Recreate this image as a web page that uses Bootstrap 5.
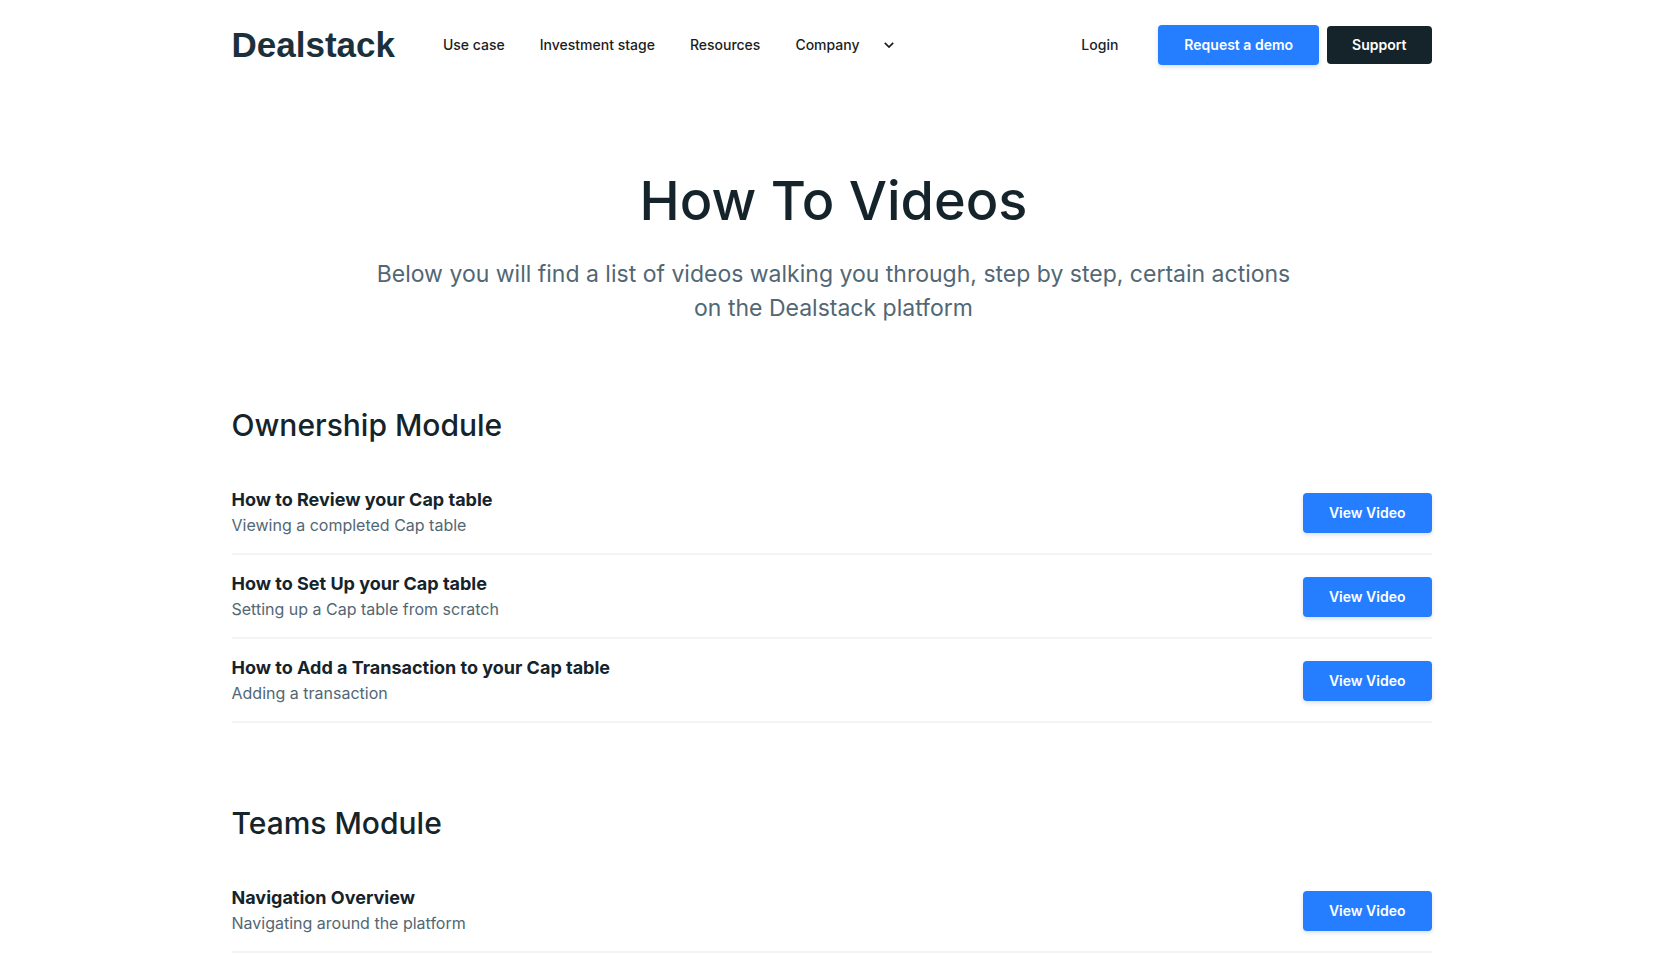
<!DOCTYPE html>
<html lang="en">
<head>
<meta charset="utf-8">
<meta name="viewport" content="width=device-width, initial-scale=1">
<title>How To Videos – Dealstack</title>
<link href="https://cdn.jsdelivr.net/npm/bootstrap@5.3.0/dist/css/bootstrap.min.css" rel="stylesheet">
<style>
  :root { --ink: #15242b; --slate: #526774; --brand-blue: #247eff; }
  body { font-family: Inter, "Liberation Sans", sans-serif; color: var(--ink); background: #fff; }
  .page-wrap { max-width: 1200px; }
  .site-nav { min-height: 89px; padding: 0; }
  .site-nav .navbar-brand { font-family: "Liberation Sans", Arial, sans-serif; font-size: 35px; line-height: 40px; font-weight: 700; color: #1c303c; margin-right: 40px; padding: 0; }
  .site-nav .navbar-nav { gap: 19px; }
  .site-nav .nav-link { font-size: 14px; line-height: 24px; font-weight: 500; color: #1c1c1c; padding: 8px; }
  .site-nav .nav-link.login { color: var(--ink); }
  .site-btn { font-size: 14px; line-height: 24px; font-weight: 600; color: #fff; border: 0; border-radius: 4px; padding: 8px 26px; }
  .site-btn:hover { color: #fff; }
  .btn-blue { background: var(--brand-blue); box-shadow: 0 2px 4px rgba(20, 40, 60, .15); }
  .btn-ink { background: var(--ink); padding: 7px 25px; }
  .btn-blue:hover { background: #116fef; }
  .btn-ink:hover { background: #223740; }
  .hero { padding-top: 76px; }
  .hero h1 { font-size: 54px; line-height: 72px; font-weight: 500; margin-bottom: 20px; }
  .intro { font-size: 23px; line-height: 34px; font-weight: 400; color: var(--slate); max-width: 930px; }
  .module { margin-top: 80px; }
  .module h2 { font-size: 30px; line-height: 40px; font-weight: 500; margin-bottom: 26px; }
  .video-row { padding: 16px 0 15px; border-bottom: 2px solid #f4f4f4; }
  .video-row h3 { font-size: 18px; line-height: 26px; font-weight: 700; }
  .video-row p { font-size: 16px; line-height: 25px; color: var(--slate); }
</style>
</head>
<body>
<div class="container-fluid page-wrap px-3 px-xl-0">
  <nav class="navbar navbar-expand-lg site-nav">
    <a class="navbar-brand" href="#">Dealstack</a>
    <ul class="navbar-nav flex-row flex-wrap me-auto">
      <li class="nav-item"><a class="nav-link" href="#">Use case</a></li>
      <li class="nav-item"><a class="nav-link" href="#">Investment stage</a></li>
      <li class="nav-item"><a class="nav-link" href="#">Resources</a></li>
      <li class="nav-item"><a class="nav-link d-flex align-items-center gap-4" href="#">Company
        <svg width="10" height="6" viewBox="0 0 10 6" fill="none" stroke="currentColor" stroke-width="1.7" aria-hidden="true"><path d="M.8.8 5 5 9.2.8"/></svg></a></li>
    </ul>
    <div class="d-flex align-items-center gap-2">
      <a class="nav-link login me-4" href="#">Login</a>
      <button type="button" class="btn site-btn btn-blue">Request a demo</button>
      <button type="button" class="btn site-btn btn-ink">Support</button>
    </div>
  </nav>

  <main>
    <header class="hero text-center ps-1">
      <h1>How To Videos</h1>
      <p class="intro mx-auto mb-0">Below you will find a list of videos walking you through, step by step, certain actions on the Dealstack platform</p>
    </header>

    <section class="module">
      <h2>Ownership Module</h2>
      <div class="video-row d-flex align-items-center justify-content-between gap-3">
        <div><h3 class="mb-0">How to Review your Cap table</h3><p class="mb-0">Viewing a completed Cap table</p></div>
        <button type="button" class="btn site-btn btn-blue text-nowrap">View Video</button>
      </div>
      <div class="video-row d-flex align-items-center justify-content-between gap-3">
        <div><h3 class="mb-0">How to Set Up your Cap table</h3><p class="mb-0">Setting up a Cap table from scratch</p></div>
        <button type="button" class="btn site-btn btn-blue text-nowrap">View Video</button>
      </div>
      <div class="video-row d-flex align-items-center justify-content-between gap-3">
        <div><h3 class="mb-0">How to Add a Transaction to your Cap table</h3><p class="mb-0">Adding a transaction</p></div>
        <button type="button" class="btn site-btn btn-blue text-nowrap">View Video</button>
      </div>
    </section>

    <section class="module">
      <h2>Teams Module</h2>
      <div class="video-row d-flex align-items-center justify-content-between gap-3">
        <div><h3 class="mb-0">Navigation Overview</h3><p class="mb-0">Navigating around the platform</p></div>
        <button type="button" class="btn site-btn btn-blue text-nowrap">View Video</button>
      </div>
    </section>
  </main>
</div>
<script src="https://cdn.jsdelivr.net/npm/bootstrap@5.3.0/dist/js/bootstrap.bundle.min.js"></script>
</body>
</html>
